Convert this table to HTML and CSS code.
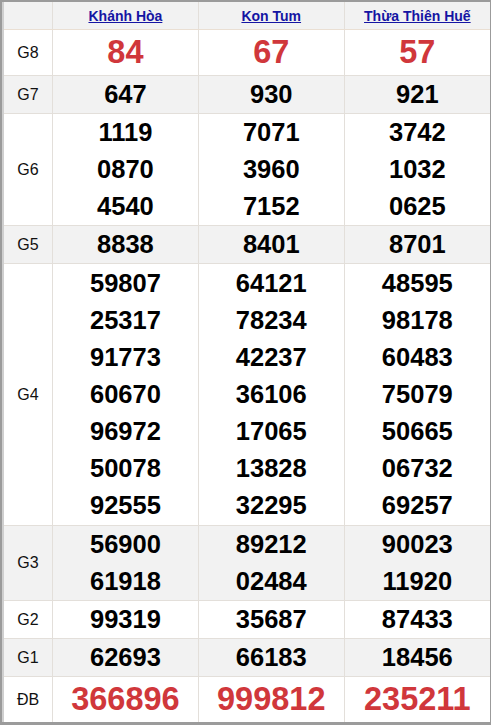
FILE: index.html
```html
<!DOCTYPE html>
<html lang="vi">
<head>
    <meta charset="UTF-8">
    <meta name="viewport" content="width=device-width, initial-scale=1.0">
    <title>Kết quả xổ số miền Trung</title>
    <link rel="stylesheet" href="styles.css">
</head>
<body>
    <div class="frame">
        <table class="results">
            <thead>
                <tr class="head-row">
                    <th class="label"></th>
                    <th><a href="#">Khánh Hòa</a></th>
                    <th><a href="#">Kon Tum</a></th>
                    <th><a href="#">Thừa Thiên Huế</a></th>
                </tr>
            </thead>
            <tbody>
                <tr class="big">
                    <td class="label">G8</td>
                    <td><div class="num red">84</div></td>
                    <td><div class="num red">67</div></td>
                    <td><div class="num red">57</div></td>
                </tr>
                <tr class="alt">
                    <td class="label">G7</td>
                    <td><div class="num">647</div></td>
                    <td><div class="num">930</div></td>
                    <td><div class="num">921</div></td>
                </tr>
                <tr>
                    <td class="label">G6</td>
                    <td><div class="num">1119</div><div class="num">0870</div><div class="num">4540</div></td>
                    <td><div class="num">7071</div><div class="num">3960</div><div class="num">7152</div></td>
                    <td><div class="num">3742</div><div class="num">1032</div><div class="num">0625</div></td>
                </tr>
                <tr class="alt">
                    <td class="label">G5</td>
                    <td><div class="num">8838</div></td>
                    <td><div class="num">8401</div></td>
                    <td><div class="num">8701</div></td>
                </tr>
                <tr class="g4">
                    <td class="label">G4</td>
                    <td>
                        <div class="num">59807</div><div class="num">25317</div><div class="num">91773</div>
                        <div class="num">60670</div><div class="num">96972</div><div class="num">50078</div>
                        <div class="num">92555</div>
                    </td>
                    <td>
                        <div class="num">64121</div><div class="num">78234</div><div class="num">42237</div>
                        <div class="num">36106</div><div class="num">17065</div><div class="num">13828</div>
                        <div class="num">32295</div>
                    </td>
                    <td>
                        <div class="num">48595</div><div class="num">98178</div><div class="num">60483</div>
                        <div class="num">75079</div><div class="num">50665</div><div class="num">06732</div>
                        <div class="num">69257</div>
                    </td>
                </tr>
                <tr class="alt">
                    <td class="label">G3</td>
                    <td><div class="num">56900</div><div class="num">61918</div></td>
                    <td><div class="num">89212</div><div class="num">02484</div></td>
                    <td><div class="num">90023</div><div class="num">11920</div></td>
                </tr>
                <tr>
                    <td class="label">G2</td>
                    <td><div class="num">99319</div></td>
                    <td><div class="num">35687</div></td>
                    <td><div class="num">87433</div></td>
                </tr>
                <tr class="alt">
                    <td class="label">G1</td>
                    <td><div class="num">62693</div></td>
                    <td><div class="num">66183</div></td>
                    <td><div class="num">18456</div></td>
                </tr>
                <tr class="big">
                    <td class="label">ĐB</td>
                    <td><div class="num red">366896</div></td>
                    <td><div class="num red">999812</div></td>
                    <td><div class="num red">235211</div></td>
                </tr>
            </tbody>
        </table>
    </div>
</body>
</html>
```

FILE: styles.css
```css
body {
    margin: 0;
    font-family: "Liberation Sans", Arial, sans-serif;
    background-color: #ffffff;
}

.frame {
    width: 491px;
    height: 725px;
    box-sizing: border-box;
    border: 2px solid #9b9b9b;
    border-bottom-width: 3px;
    background-color: #cfcfcf;
    padding-left: 2px;
}

.results {
    width: 486px;
    border-collapse: collapse;
    table-layout: fixed;
    background-color: #ffffff;
}

.results th,
.results td {
    border: 1px solid #e3dfda;
    padding: 0;
    text-align: center;
    vertical-align: middle;
}

.results tr:first-child th {
    border-top: none;
}

.results tr > :first-child {
    border-left: none;
}

.results tr > :last-child {
    border-right: none;
}

.results tbody tr:last-child td {
    border-bottom: none;
}

.results .label {
    width: 48px;
    font-size: 16px;
    font-weight: normal;
    color: #111;
}

.head-row th {
    height: 27px;
    background-color: #f2f2f2;
    border-bottom-color: #eadfd3;
}

.head-row a {
    color: #1515a3;
    font-size: 14px;
    font-weight: bold;
    text-decoration: underline;
}

.alt td {
    background-color: #f2f2f2;
}

.num {
    font-size: 25.5px;
    font-weight: bold;
    line-height: 37px;
    color: #000;
}

.big .num {
    line-height: 45px;
}

.num.red {
    font-size: 32.5px;
    color: #d0373b;
}

.g4 td {
    padding: 1px 0;
}
```
